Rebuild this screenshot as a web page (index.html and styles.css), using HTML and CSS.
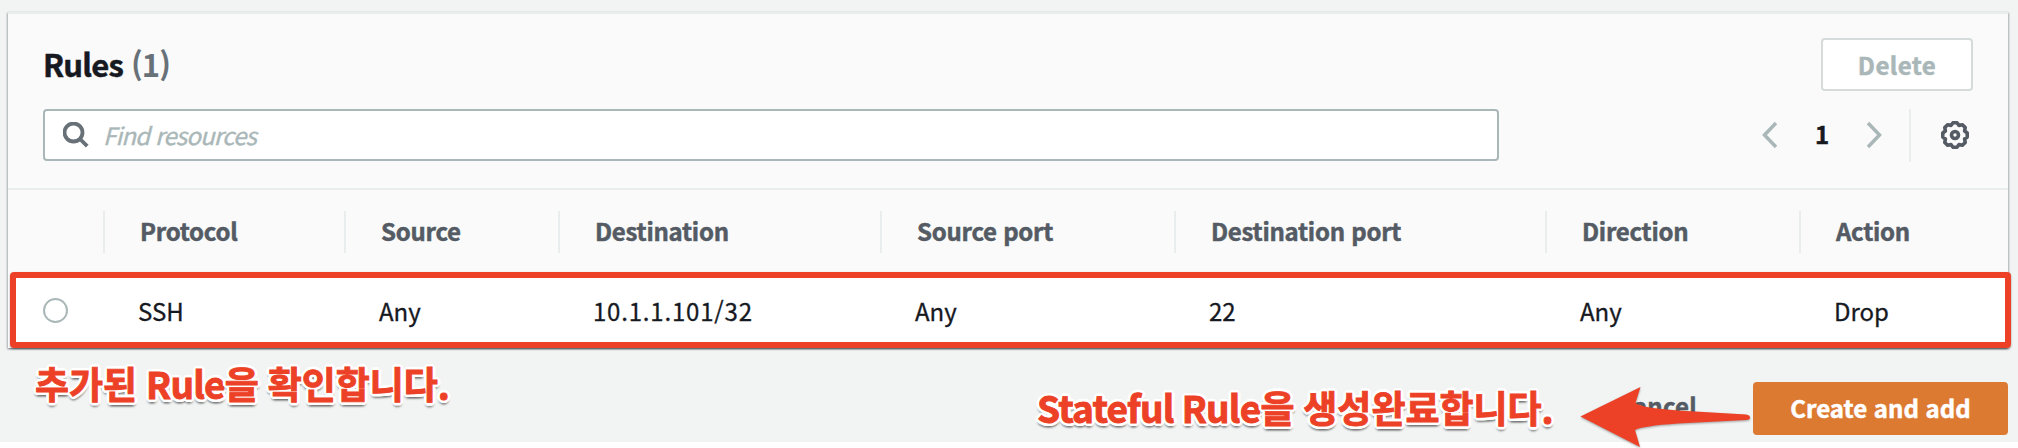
FILE: index.html
```html
<!DOCTYPE html>
<html lang="ko">
<head>
<meta charset="utf-8">
<title>Rules</title>
<link rel="stylesheet" href="styles.css">
</head>
<body>
<main class="page">
  <section class="panel">
    <header class="panel-header">
      <div class="title-row">
        <h2 class="title">Rules <span class="count">(1)</span></h2>
        <button class="btn btn-delete" disabled>Delete</button>
      </div>
      <div class="tools-row">
        <div class="search">
          <svg class="search-icon" viewBox="0 0 26 26"><circle cx="10.5" cy="10.5" r="9"/><path d="M17 17l7.2 7.2"/></svg>
          <span class="placeholder">Find resources</span>
        </div>
        <nav class="pagination">
          <svg class="chevron" viewBox="0 0 16 28"><path d="M14 2L2.500 14 14 26"/></svg>
          <span class="page-number">1</span>
          <svg class="chevron" viewBox="0 0 16 28"><path d="M2 2l11.500 12L2 26"/></svg>
        </nav>
        <div class="settings">
          <svg class="gear" viewBox="0 0 28 28"><path d="M12.030 1.760H15.970L17.980 4.390 21.410 3.810 24.190 6.590 23.610 10.020 26.240 12.030V15.970L23.610 17.980 24.190 21.410 21.410 24.190 17.980 23.610 15.970 26.240H12.030L10.020 23.610 6.590 24.190 3.810 21.410 4.390 17.980 1.760 15.970V12.030L4.390 10.020 3.810 6.590 6.590 3.810 10.020 4.390z"/><circle cx="14" cy="14" r="3.500"/></svg>
        </div>
      </div>
    </header>
    <div class="grid head">
      <span></span><span class="th">Protocol</span><span class="th">Source</span><span class="th">Destination</span><span class="th">Source port</span><span class="th">Destination port</span><span class="th">Direction</span><span class="th">Action</span>
    </div>
    <div class="grid row">
      <span class="select"><i class="radio"></i></span><span class="td">SSH</span><span class="td">Any</span><span class="td ip">10.1.1.101/32</span><span class="td">Any</span><span class="td">22</span><span class="td">Any</span><span class="td">Drop</span>
    </div>
  </section>
  <footer class="actions">
    <span class="cancel">Cancel</span>
    <button class="btn btn-create">Create and add</button>
  </footer>
  <div class="highlight"></div>
  <p class="note note-rule">추가된 <span class="latin">Rule</span>을 확인합니다.</p>
  <p class="note note-done"><span class="latin">Stateful Rule</span>을 생성완료합니다.</p>
  <svg class="arrow" viewBox="0 0 172 63"><path d="M2.500 31.500L62.500 2 57.500 18Q64 23 100 25.500L168 29.500Q172 30 172 32.500T168 35L100 38.500Q64 41 57 45L62 62z"/></svg>
</main>
</body>
</html>
```

FILE: styles.css
```css
* { box-sizing: border-box; }
body {
  margin: 0;
  height: 448px;
  overflow: hidden;
  background: #fff;
  font-family: "Noto Sans CJK KR", "Noto Sans", sans-serif;
  font-size: 24px;
  color: #16191f;
}
svg { display: block; fill: none; }
.page {
  position: relative;
  height: 442px;
  padding: 12px 10px 0 8px;
  background: #f2f3f3;
}
.panel {
  height: 336px;
  border-top: 2px solid #eaeded;
  background: #fff;
  box-shadow: 0 1px 2px rgba(0, 28, 36, .3), 1px 1px 2px rgba(0, 28, 36, .2), -1px 1px 2px rgba(0, 28, 36, .2);
}
.panel-header {
  height: 176px;
  padding: 24px 35px 0;
  background: #fafafa;
  border-bottom: 2px solid #eaeded;
}
.title-row { display: flex; justify-content: space-between; height: 71px; }
.title {
  margin: 0;
  font-size: 31px;
  font-weight: 700;
  line-height: 51px;
  letter-spacing: -.8px;
  -webkit-text-stroke: .5px;
}
.count { color: #687078; -webkit-text-stroke: 0; }
.btn {
  height: 53px;
  padding: 0;
  border: 2px solid;
  border-radius: 4px;
  font: 700 24px/49px "Noto Sans CJK KR", "Noto Sans", sans-serif;
  -webkit-text-stroke: .5px;
}
.btn-delete { width: 152px; color: #aab7b8; background: #fff; border-color: #d5dbdb; letter-spacing: .4px; }
.tools-row { display: flex; height: 53px; }
.search {
  display: flex;
  align-items: center;
  width: 1456px;
  height: 52px;
  padding-left: 18px;
  background: #fff;
  border: 2px solid #aab7b8;
  border-radius: 4px;
}
.search-icon { width: 26px; height: 26px; stroke: #687078; stroke-width: 3.8; }
.placeholder { margin-left: 14px; line-height: 48px; font-style: italic; letter-spacing: -.8px; color: #aab7b8; -webkit-text-stroke: .4px; }
.pagination { display: flex; align-items: center; margin-left: 263px; width: 147px; height: 52px; }
.chevron { width: 16px; height: 28px; stroke: #aab7b8; stroke-width: 3.5; }
.page-number { width: 88px; text-align: center; font-weight: 700; line-height: 48px; padding-bottom: 2px; -webkit-text-stroke: .5px; }
.settings {
  display: flex;
  align-items: center;
  padding: 0 0 1px 30px;
  border-left: 2px solid #eaeded;
}
.gear { width: 28px; height: 28px; stroke: #545b64; stroke-width: 3.6; stroke-linejoin: round; }
.grid {
  display: grid;
  grid-template-columns: 95px 241px 214px 322px 294px 371px 254px 209px;
}
.head { height: 82px; padding-top: 21px; background: #fafafa; }
.th {
  height: 42px;
  padding-left: 35px;
  border-left: 2px solid #eaeded;
  font-weight: 700;
  line-height: 40px;
  letter-spacing: -.27px;
  color: #545b64;
  -webkit-text-stroke: .5px;
}
.row { height: 76px; line-height: 77px; }
.td { padding-left: 35px; -webkit-text-stroke: .3px; }
.ip { letter-spacing: .8px; }
.select { padding: 26px 0 0 35px; }
.radio {
  display: block;
  width: 25px;
  height: 25px;
  border: 2px solid #aab7b8;
  border-radius: 50%;
}
.actions { display: flex; justify-content: flex-end; padding-top: 34px; }
.cancel { margin-right: 56px; font-weight: 700; line-height: 48px; letter-spacing: .2px; color: #545b64; -webkit-text-stroke: .5px; }
.btn-create { width: 255px; color: #fff; background: #dd7a32; border-color: #dd7a32; line-height: 47px; padding-bottom: 2px; }

/* annotation layer over the console */
.highlight {
  position: absolute;
  left: 10px;
  top: 272px;
  width: 2001px;
  height: 76px;
  border: 6px solid #ec4126;
  border-radius: 4px;
  box-shadow: 0 1px 2px rgba(0, 0, 0, .4);
}
.note {
  position: absolute;
  margin: 0;
  font-size: 37px;
  font-weight: 700;
  line-height: 54px;
  word-spacing: -1.5px;
  white-space: nowrap;
  color: #ec4126;
  -webkit-text-stroke: .9px #ec4126;
  text-shadow:
    3px 0 #fff, -3px 0 #fff, 0 3px #fff, 0 -3px #fff,
    2px 2px #fff, -2px 2px #fff, 2px -2px #fff, -2px -2px #fff,
    3px 1px #fff, -3px 1px #fff, 3px -1px #fff, -3px -1px #fff,
    1px 3px #fff, -1px 3px #fff, 1px -3px #fff, -1px -3px #fff,
    0 5px 2px rgba(0, 0, 0, .3), 2px 4px 2px rgba(0, 0, 0, .2), -2px 4px 2px rgba(0, 0, 0, .2);
}
.latin { letter-spacing: -.8px; }
.note-rule { left: 35px; top: 356px; }
.note-done { left: 1037px; top: 380px; }
.arrow {
  position: absolute;
  left: 1578px;
  top: 385px;
  width: 172px;
  height: 63px;
  fill: #ec4126;
  filter: drop-shadow(0 1px 1px rgba(0, 0, 0, .35));
}
```
